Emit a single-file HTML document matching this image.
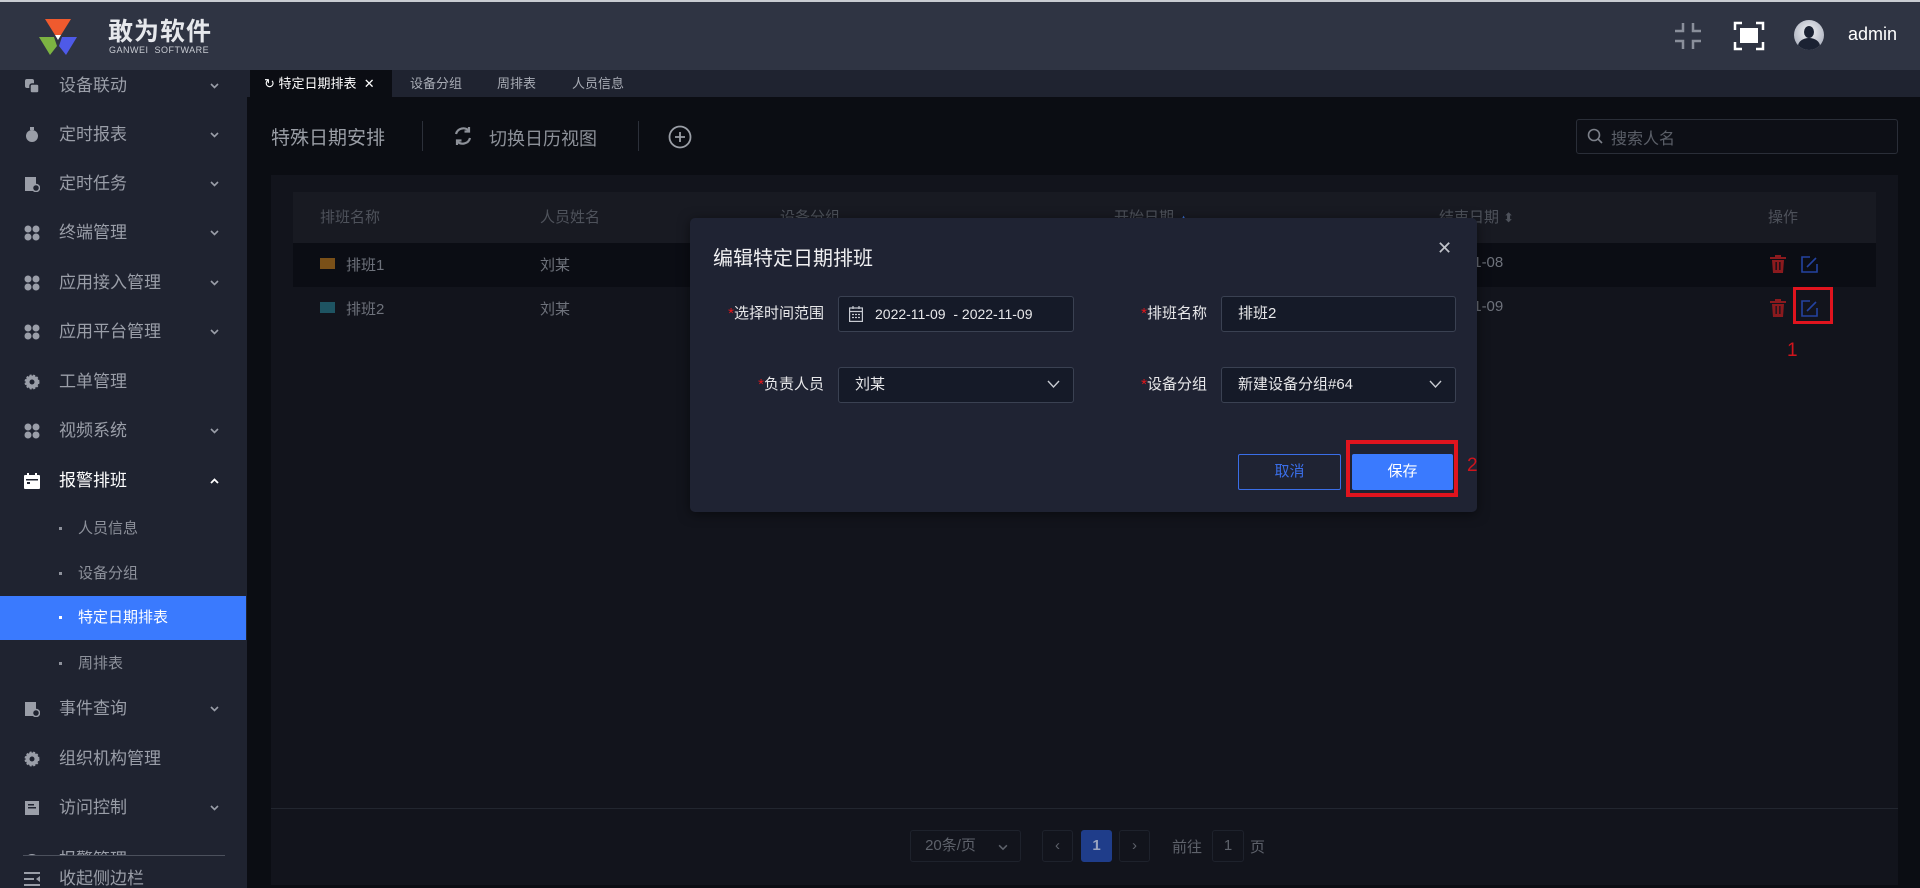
<!DOCTYPE html>
<html><head><meta charset="utf-8"><style>
*{margin:0;padding:0;box-sizing:border-box}
body{width:1920px;height:888px;overflow:hidden;background:#0b0d13;font-family:"Liberation Sans","Noto Sans CJK SC",sans-serif;position:relative}
.a{position:absolute;white-space:nowrap}
#hdr{left:0;top:0;width:1920px;height:70px;background:#2f3443;border-top:2px solid #c9ccd2}
#side{left:0;top:70px;width:247px;height:818px;background:#1f2330;overflow:hidden}
.mi{position:absolute;left:0;width:247px;height:40px;color:#9a9ea8;font-size:17px;line-height:40px}
.mi .ic{position:absolute;left:24px;top:12px;width:16px;height:16px}
.mi .t{position:absolute;left:59px}
.mi .ch{position:absolute;left:210px;top:17px;width:9px;height:6px}
.si{position:absolute;left:0;width:247px;height:44px;line-height:44px;color:#8d919b;font-size:15px}
.si .d{position:absolute;left:59px;top:20px;width:3px;height:3px;background:#8d919b}
.si .t{position:absolute;left:78px}
#tabs{left:247px;top:70px;width:1673px;height:27px;background:#1f2330}
.tab{position:absolute;top:0;height:27px;line-height:27px;font-size:13px;color:#a8acb5}
.inp{position:absolute;background:#151a28;border:1px solid #3a4152;border-radius:3px;color:#e8e8ea;font-size:15px;line-height:34px;padding-left:16px}
.lbl{position:absolute;color:#e8e8ea;font-size:15px;text-align:right}
.lbl b{color:#e4161b;font-weight:normal}
.th{position:absolute;top:192px;height:51px;line-height:51px;color:#4e525b;font-size:15px}
.td{position:absolute;color:#6e727b;font-size:15px}
.pg{position:absolute;top:830px;height:32px;border:1px solid #1e222c;background:#12141c;border-radius:3px;color:#5e626b;font-size:15px;text-align:center;line-height:30px}
</style></head><body>
<svg width="0" height="0" style="position:absolute"><defs><symbol id="chd" viewBox="0 0 9 6"><path d="M1 1 L4.5 4.5 L8 1" fill="none" stroke="#9a9ea8" stroke-width="1.6"/></symbol></defs></svg>

<div class="a" id="hdr">
 <svg class="a" style="left:37px;top:14px" width="42" height="42" viewBox="0 0 42 42">
  <path d="M8 3 L34 3 L24 19 L18 19 Z" fill="#ef5a2e"/>
  <path d="M2 21 L17 21 L20 30 L13 39 Z" fill="#7cb342"/>
  <path d="M40 21 L25 21 L22 30 L29 39 Z" fill="#4e5ae8"/>
  <path d="M18 19 L24 19 L21 24 Z" fill="#fff"/>
 </svg>
 <div class="a" style="left:108px;top:10px;font-size:25px;font-weight:bold;color:#e6e8ec;letter-spacing:1px">敢为软件</div>
 <div class="a" style="left:109px;top:43px;font-size:9px;color:#c8cbd2;letter-spacing:.5px">GANWEI&nbsp; SOFTWARE</div>
 <svg class="a" style="left:1673px;top:19px" width="30" height="30" viewBox="0 0 30 30" fill="none" stroke="#8a8f9b" stroke-width="2.5">
  <path d="M10 2 V10 H2 M20 2 V10 H28 M2 20 H10 V28 M28 20 H20 V28"/>
 </svg>
 <svg class="a" style="left:1733px;top:19px" width="32" height="30" viewBox="0 0 32 30" fill="none">
  <path d="M2 9 V2 H9 M23 2 H30 V9 M2 21 V28 H9 M23 28 H30 V21" stroke="#fff" stroke-width="2.5"/>
  <rect x="7" y="7" width="18" height="15" fill="#fff"/>
 </svg>
 <div class="a" style="left:1794px;top:18px;width:30px;height:30px;border-radius:50%;background:radial-gradient(circle at 50% 40%,#f2f3f6,#9aa0b0);overflow:hidden">
  <div class="a" style="left:10px;top:6px;width:10px;height:12px;border-radius:50%;background:#1b2233"></div>
  <div class="a" style="left:4px;top:18px;width:22px;height:16px;border-radius:50% 50% 0 0;background:#1b2233"></div>
 </div>
 <div class="a" style="left:1848px;top:22px;font-size:18px;color:#fff">admin</div>
</div>

<div class="a" id="side">
 <div class="mi" style="top:-4px"><svg class="ic" viewBox="0 0 16 16"><rect x="1" y="1" width="9" height="9" rx="2" fill="#9a9ea8"/><rect x="6" y="6" width="9" height="9" rx="2" fill="#9a9ea8" stroke="#1f2330" stroke-width="1.5"/></svg><span class="t">设备联动</span><svg class="ch"><use href="#chd"/></svg></div>
 <div class="mi" style="top:45px"><svg class="ic" viewBox="0 0 16 16"><circle cx="8" cy="9" r="6" fill="#9a9ea8"/><rect x="6" y="0" width="4" height="3" fill="#9a9ea8"/></svg><span class="t">定时报表</span><svg class="ch"><use href="#chd"/></svg></div>
 <div class="mi" style="top:94px"><svg class="ic" viewBox="0 0 16 16"><rect x="1" y="1" width="11" height="14" fill="#9a9ea8"/><circle cx="12" cy="12" r="3.5" fill="#1f2330" stroke="#9a9ea8" stroke-width="1.5"/></svg><span class="t">定时任务</span><svg class="ch"><use href="#chd"/></svg></div>
 <div class="mi" style="top:143px"><svg class="ic" viewBox="0 0 16 16" fill="#9a9ea8"><circle cx="4" cy="4" r="3.5"/><circle cx="12" cy="4" r="3.5"/><circle cx="4" cy="12" r="3.5"/><circle cx="12" cy="12" r="3.5"/></svg><span class="t">终端管理</span><svg class="ch"><use href="#chd"/></svg></div>
 <div class="mi" style="top:193px"><svg class="ic" viewBox="0 0 16 16" fill="#9a9ea8"><circle cx="4" cy="4" r="3.5"/><circle cx="12" cy="4" r="3.5"/><circle cx="4" cy="12" r="3.5"/><circle cx="12" cy="12" r="3.5"/></svg><span class="t">应用接入管理</span><svg class="ch"><use href="#chd"/></svg></div>
 <div class="mi" style="top:242px"><svg class="ic" viewBox="0 0 16 16" fill="#9a9ea8"><circle cx="4" cy="4" r="3.5"/><circle cx="12" cy="4" r="3.5"/><circle cx="4" cy="12" r="3.5"/><circle cx="12" cy="12" r="3.5"/></svg><span class="t">应用平台管理</span><svg class="ch"><use href="#chd"/></svg></div>
 <div class="mi" style="top:292px"><svg class="ic" viewBox="0 0 16 16"><circle cx="8" cy="8" r="6.5" fill="#9a9ea8" stroke="#9a9ea8" stroke-width="2" stroke-dasharray="2 1.5"/><circle cx="8" cy="8" r="2.5" fill="#1f2330"/></svg><span class="t">工单管理</span></div>
 <div class="mi" style="top:341px"><svg class="ic" viewBox="0 0 16 16" fill="#9a9ea8"><circle cx="4" cy="4" r="3.5"/><circle cx="12" cy="4" r="3.5"/><circle cx="4" cy="12" r="3.5"/><circle cx="12" cy="12" r="3.5"/></svg><span class="t">视频系统</span><svg class="ch"><use href="#chd"/></svg></div>
 <div class="mi" style="top:391px;color:#fff"><svg class="ic" viewBox="0 0 16 16"><rect x="0" y="2" width="16" height="14" rx="1" fill="#fff"/><rect x="3" y="0" width="2" height="4" fill="#fff"/><rect x="11" y="0" width="2" height="4" fill="#fff"/><rect x="2" y="6" width="12" height="1.5" fill="#1f2330"/><rect x="3" y="9" width="3" height="2" fill="#1f2330"/></svg><span class="t">报警排班</span><svg class="ch" viewBox="0 0 9 6"><path d="M1 5 L4.5 1.5 L8 5" fill="none" stroke="#fff" stroke-width="1.8"/></svg></div>
 <div class="si" style="top:437px"><span class="d"></span><span class="t">人员信息</span></div>
 <div class="si" style="top:482px"><span class="d"></span><span class="t">设备分组</span></div>
 <div class="si" style="top:526px;background:#3a7afe;color:#fff;width:246px"><span class="d" style="background:#fff"></span><span class="t">特定日期排表</span></div>
 <div class="si" style="top:572px"><span class="d"></span><span class="t">周排表</span></div>
 <div class="mi" style="top:619px"><svg class="ic" viewBox="0 0 16 16"><rect x="1" y="1" width="11" height="14" fill="#9a9ea8"/><circle cx="12" cy="12" r="3.5" fill="#1f2330" stroke="#9a9ea8" stroke-width="1.5"/></svg><span class="t">事件查询</span><svg class="ch"><use href="#chd"/></svg></div>
 <div class="mi" style="top:669px"><svg class="ic" viewBox="0 0 16 16"><circle cx="8" cy="8" r="6.5" fill="#9a9ea8" stroke="#9a9ea8" stroke-width="2" stroke-dasharray="2 1.5"/><circle cx="8" cy="8" r="2.5" fill="#1f2330"/></svg><span class="t">组织机构管理</span></div>
 <div class="mi" style="top:718px"><svg class="ic" viewBox="0 0 16 16"><rect x="1" y="1" width="14" height="14" fill="#9a9ea8"/><rect x="4" y="4" width="6" height="1.5" fill="#1f2330"/><rect x="4" y="7" width="8" height="1.5" fill="#1f2330"/></svg><span class="t">访问控制</span><svg class="ch"><use href="#chd"/></svg></div>
 <div class="mi" style="top:770px"><svg class="ic" viewBox="0 0 16 16"><circle cx="8" cy="9" r="7" fill="#9a9ea8"/></svg><span class="t">报警管理</span></div>
 <div class="a" style="left:0;top:785px;width:247px;height:33px;background:#1f2330"></div>
 <div class="a" style="left:23px;top:785px;width:202px;height:1px;background:#4b505c"></div>
 <div class="mi" style="top:789px"><svg class="ic" viewBox="0 0 16 16" fill="#9a9ea8"><rect x="0" y="1" width="16" height="2"/><rect x="0" y="7" width="10" height="2"/><rect x="0" y="13" width="16" height="2"/><path d="M16 5 L12 8 L16 11Z"/></svg><span class="t">收起侧边栏</span></div>
</div>
<div class="a" style="left:247px;top:70px;width:1px;height:818px;background:#0b0d13"></div>

<div class="a" id="tabs">
 <div class="tab" style="left:3px;width:142px;background:#0b0d13;color:#fff;padding-left:14px">↻ 特定日期排表 &nbsp;✕</div>
 <div class="tab" style="left:163px">设备分组</div>
 <div class="tab" style="left:250px">周排表</div>
 <div class="tab" style="left:325px">人员信息</div>
</div>

<div class="a" style="left:271px;top:123px;font-size:19px;color:#9a9ea6">特殊日期安排</div>
<div class="a" style="left:422px;top:121px;width:1px;height:30px;background:#2c303a"></div>
<svg class="a" style="left:452px;top:125px" width="22" height="22" viewBox="0 0 22 22" fill="none" stroke="#8d9199" stroke-width="2.2"><path d="M4 9 A7.5 7.5 0 0 1 17 6 M18 13 A7.5 7.5 0 0 1 5 16"/><path d="M17 2 V6.5 H12.5 M5 20 V15.5 H9.5"/></svg>
<div class="a" style="left:489px;top:125px;font-size:18px;color:#8d9199">切换日历视图</div>
<div class="a" style="left:638px;top:121px;width:1px;height:30px;background:#2c303a"></div>
<svg class="a" style="left:668px;top:125px" width="24" height="24" viewBox="0 0 24 24" fill="none" stroke="#9a9ea6" stroke-width="1.8"><circle cx="12" cy="12" r="10.5"/><path d="M12 7 V17 M7 12 H17"/></svg>
<div class="a" style="left:1576px;top:119px;width:322px;height:35px;border:1px solid #2a2e38;border-radius:3px;background:#0d0f16"></div>
<svg class="a" style="left:1587px;top:128px" width="16" height="16" viewBox="0 0 16 16" fill="none" stroke="#7c8089" stroke-width="1.6"><circle cx="7" cy="7" r="5.5"/><path d="M11 11 L15 15"/></svg>
<div class="a" style="left:1611px;top:125px;font-size:16px;color:#5b5f68">搜索人名</div>

<div class="a" style="left:271px;top:175px;width:1627px;height:710px;background:#12141c"></div>
<div class="a" style="left:293px;top:192px;width:1583px;height:51px;background:#181a22"></div>
<div class="a" style="left:293px;top:243px;width:1583px;height:44px;background:#0b0d14"></div>
<div class="th" style="left:320px">排班名称</div>
<div class="th" style="left:540px">人员姓名</div>
<div class="th" style="left:780px">设备分组</div>
<div class="th" style="left:1114px">开始日期 <span style="color:#3a6fd6;font-size:11px">▲</span></div>
<div class="th" style="left:1439px">结束日期 <span style="font-size:13px">⬍</span></div>
<div class="th" style="left:1768px">操作</div>
<div class="a" style="left:320px;top:258px;width:15px;height:11px;background:#7a5018"></div>
<div class="td" style="left:346px;top:254px">排班1</div>
<div class="td" style="left:540px;top:254px">刘某</div>
<div class="td" style="left:1461px;top:254px">-11-08</div>
<div class="a" style="left:320px;top:302px;width:15px;height:11px;background:#1e5462"></div>
<div class="td" style="left:346px;top:298px">排班2</div>
<div class="td" style="left:540px;top:298px">刘某</div>
<div class="td" style="left:1461px;top:298px">-11-09</div>
<svg class="a" style="left:1770px;top:255px" width="16" height="18" viewBox="0 0 16 18" fill="#8b1a1e"><rect x="0" y="2" width="16" height="2"/><rect x="5" y="0" width="6" height="2"/><path d="M2 5 H14 L13 18 H3Z"/><rect x="5.5" y="7" width="1.3" height="8" fill="#0b0d14"/><rect x="9.2" y="7" width="1.3" height="8" fill="#0b0d14"/></svg>
<svg class="a" style="left:1801px;top:256px" width="17" height="17" viewBox="0 0 17 17" fill="none" stroke="#2443a0" stroke-width="1.6"><path d="M9 1 H1 V16 H16 V8"/><path d="M6 11 L15 2"/></svg>
<svg class="a" style="left:1770px;top:299px" width="16" height="18" viewBox="0 0 16 18" fill="#8b1a1e"><rect x="0" y="2" width="16" height="2"/><rect x="5" y="0" width="6" height="2"/><path d="M2 5 H14 L13 18 H3Z"/><rect x="5.5" y="7" width="1.3" height="8" fill="#12141c"/><rect x="9.2" y="7" width="1.3" height="8" fill="#12141c"/></svg>
<svg class="a" style="left:1801px;top:300px" width="17" height="17" viewBox="0 0 17 17" fill="none" stroke="#2443a0" stroke-width="1.6"><path d="M9 1 H1 V16 H16 V8"/><path d="M6 11 L15 2"/></svg>
<div class="a" style="left:1793px;top:287px;width:40px;height:37px;border:3px solid #e0141e"></div>
<div class="a" style="left:1787px;top:340px;font-size:19px;color:#d0141c">1</div>

<div class="a" style="left:271px;top:808px;width:1627px;height:1px;background:#22262f"></div>
<div class="pg" style="left:910px;width:111px;padding-right:30px">20条/页<svg class="a" style="right:12px;top:13px" width="10" height="7" viewBox="0 0 9 6"><path d="M1 1 L4.5 4.5 L8 1" fill="none" stroke="#5e626b" stroke-width="1.4"/></svg></div>
<div class="pg" style="left:1042px;width:31px">‹</div>
<div class="pg" style="left:1081px;width:31px;background:#1f3d8a;border-color:#1f3d8a;color:#9aa4c0;font-weight:bold">1</div>
<div class="pg" style="left:1119px;width:31px">›</div>
<div class="a" style="left:1172px;top:836px;font-size:15px;color:#5e626b">前往</div>
<div class="pg" style="left:1212px;width:32px">1</div>
<div class="a" style="left:1250px;top:836px;font-size:15px;color:#5e626b">页</div>

<div class="a" style="left:690px;top:218px;width:787px;height:294px;background:#1f2333;border-radius:5px;box-shadow:0 2px 12px rgba(0,0,0,.5)"></div>
<div class="a" style="left:713px;top:242px;font-size:20px;color:#f0f0f2">编辑特定日期排班</div>
<div class="a" style="left:1437px;top:238px;font-size:18px;color:#c0c3ca">✕</div>
<div class="lbl" style="left:700px;top:302px;width:124px"><b>*</b>选择时间范围</div>
<div class="inp" style="left:838px;top:296px;width:236px;height:36px;font-size:14px;padding-left:36px">2022-11-09 &nbsp;- 2022-11-09</div>
<svg class="a" style="left:849px;top:306px" width="14" height="16" viewBox="0 0 14 16" fill="none" stroke="#c8cbd2" stroke-width="1.2"><rect x=".6" y="2" width="12.8" height="13.4"/><path d="M.6 5.5 H13.4 M4 0 V3 M10 0 V3 M3 8.5H5 M6 8.5H8 M9 8.5H11 M3 11.5H5 M6 11.5H8 M9 11.5H11"/></svg>
<div class="lbl" style="left:1100px;top:302px;width:107px"><b>*</b>排班名称</div>
<div class="inp" style="left:1221px;top:296px;width:235px;height:36px">排班2</div>
<div class="lbl" style="left:700px;top:373px;width:124px"><b>*</b>负责人员</div>
<div class="inp" style="left:838px;top:367px;width:236px;height:36px;padding-left:16px">刘某</div>
<svg class="a" style="left:1047px;top:380px" width="13" height="9" viewBox="0 0 13 9" fill="none" stroke="#c8cbd2" stroke-width="1.4"><path d="M1 1 L6.5 7 L12 1"/></svg>
<div class="lbl" style="left:1100px;top:373px;width:107px"><b>*</b>设备分组</div>
<div class="inp" style="left:1221px;top:367px;width:235px;height:36px">新建设备分组#64</div>
<svg class="a" style="left:1429px;top:380px" width="13" height="9" viewBox="0 0 13 9" fill="none" stroke="#c8cbd2" stroke-width="1.4"><path d="M1 1 L6.5 7 L12 1"/></svg>
<div class="a" style="left:1238px;top:454px;width:103px;height:36px;border:1px solid #3a6ee8;border-radius:2px;color:#3a6ee8;font-size:15px;text-align:center;line-height:34px">取消</div>
<div class="a" style="left:1352px;top:454px;width:101px;height:36px;background:#3a7afe;border-radius:2px;color:#fff;font-size:15px;text-align:center;line-height:36px">保存</div>
<div class="a" style="left:1346px;top:440px;width:112px;height:57px;border:4px solid #e0141e"></div>
<div class="a" style="left:1467px;top:455px;font-size:19px;color:#d0141c">2</div>
</body></html>
